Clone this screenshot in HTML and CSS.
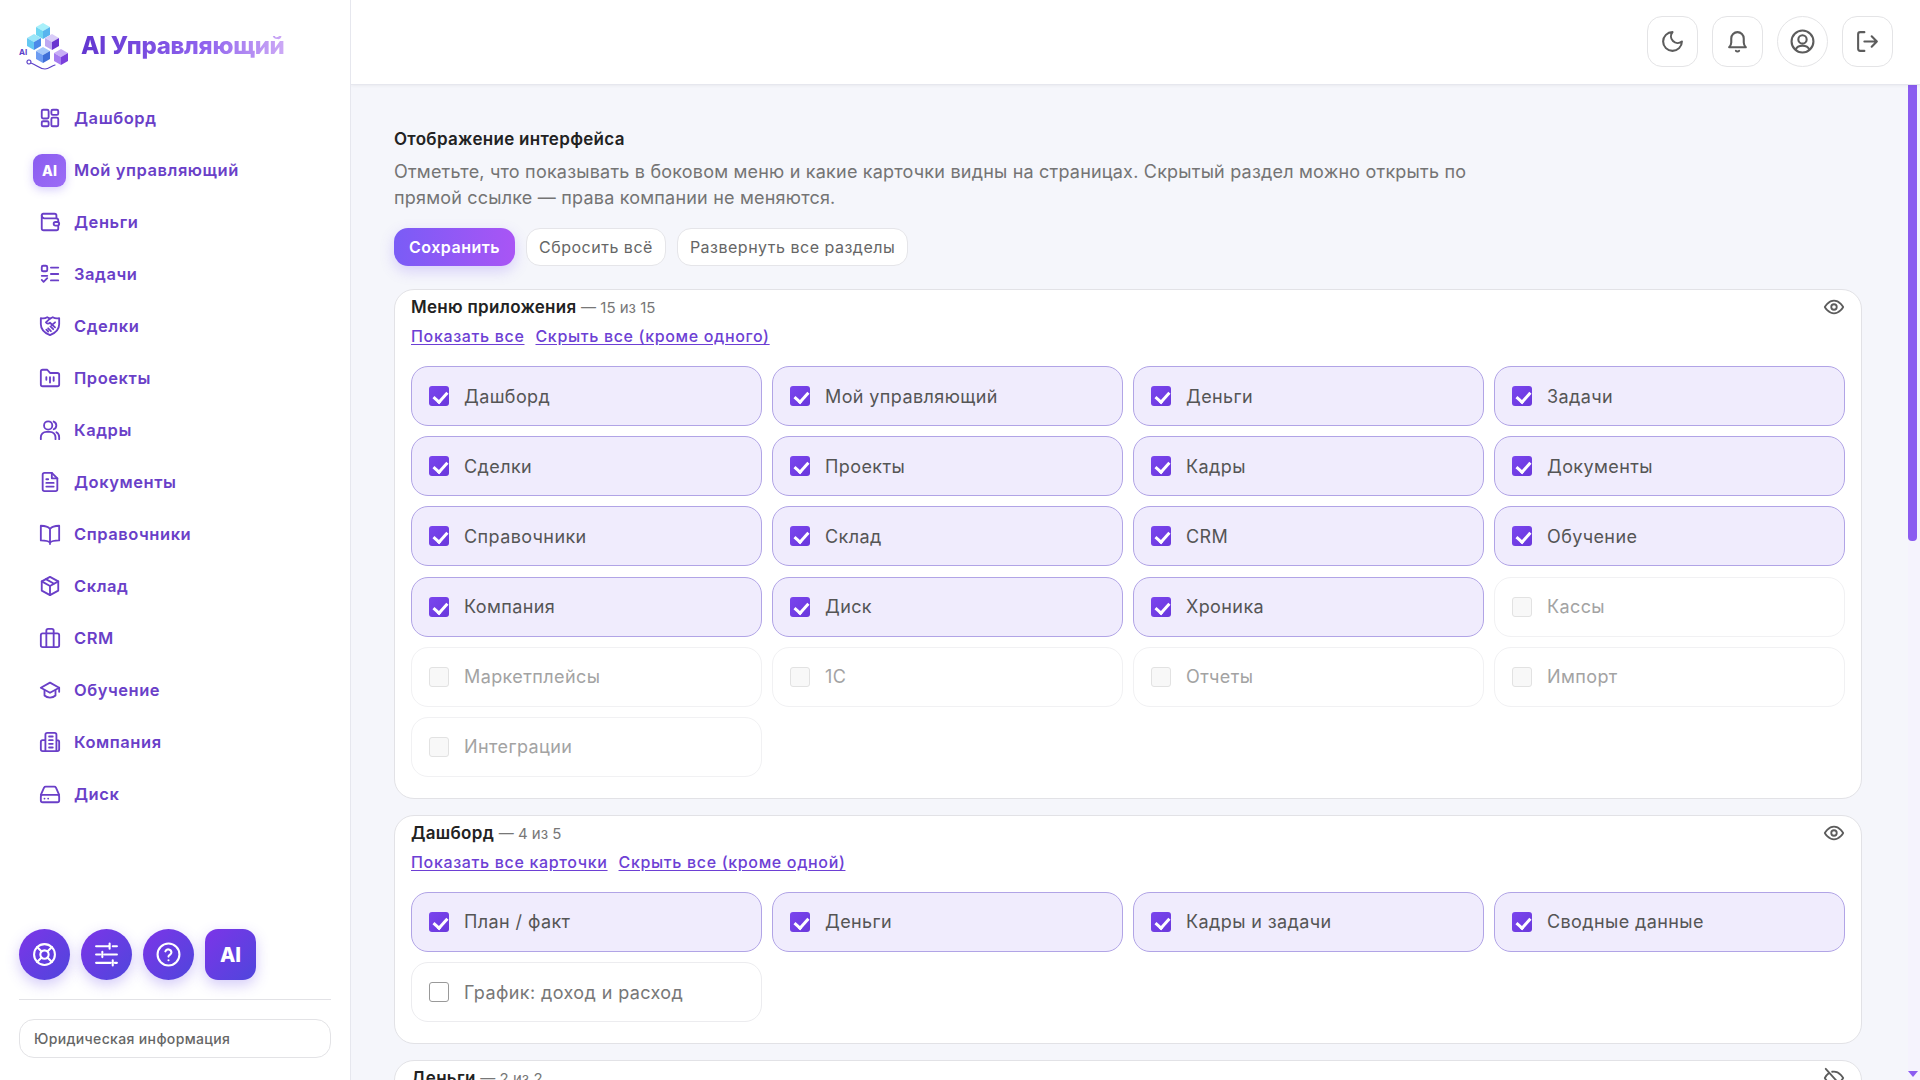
FILE: index.html
```html
<!DOCTYPE html>
<html lang="ru">
  <head>
    <meta charset="UTF-8" />
    <meta name="viewport" content="width=device-width, initial-scale=1.0" />
    <title>Отображение интерфейса</title>
    <link rel="stylesheet" href="styles.css">
  </head>
  <body>
    <div class="app">
      <aside class="sidebar">
        <div class="brand">
          <div class="brand-logo">
            <svg width="50" height="48" viewBox="0 0 50 48">
              <path d="M11 38a2 2 0 1 1-.1 0M13 41c6 2 8 6 14 6 4 0 6-3 10-4" fill="none" stroke="#5b3fc8" stroke-width="1.2"/>
              <polygon points="25,1 32,5 25,9 18,5" fill="#a8f0fa"/>
              <polygon points="18,5 25,9 25,17 18,13" fill="#6fd6f2"/>
              <polygon points="32,5 25,9 25,17 32,13" fill="#58b4ee"/>
              <polygon points="16,12 23,16 16,20 9,16" fill="#9be6f8"/>
              <polygon points="9,16 16,20 16,28 9,24" fill="#64c8f2"/>
              <polygon points="23,16 16,20 16,28 23,24" fill="#4c8ae8"/>
              <polygon points="34,12 41,16 34,20 27,16" fill="#d9cdf8"/>
              <polygon points="27,16 34,20 34,28 27,24" fill="#bda8f2"/>
              <polygon points="41,16 34,20 34,28 41,24" fill="#6a35d0"/>
              <polygon points="25,25 32,29 25,33 18,29" fill="#a5c8fa"/>
              <polygon points="18,29 25,33 25,41 18,37" fill="#6d9cf2"/>
              <polygon points="32,29 25,33 25,41 32,37" fill="#3f6fd8"/>
              <polygon points="43,27 50,31 43,35 36,31" fill="#c8aef6"/>
              <polygon points="36,31 43,35 43,43 36,39" fill="#a67cf0"/>
              <polygon points="50,31 43,35 43,43 50,39" fill="#7a3fdc"/>
            </svg>
            <span class="brand-ai">AI</span>
          </div>
          <span class="brand-name">AI Управляющий</span>
        </div>

        <nav class="nav">
          <a class="nav-item"><span class="nav-icon"><svg viewBox="0 0 24 24"><rect x="3" y="3" width="7.5" height="9.5" rx="1.5"/><rect x="13.5" y="3" width="7.5" height="5.5" rx="1.5"/><rect x="13.5" y="11.5" width="7.5" height="9.5" rx="1.5"/><rect x="3" y="15.5" width="7.5" height="5.5" rx="1.5"/></svg></span>Дашборд</a>
          <a class="nav-item"><span class="nav-badge">AI</span>Мой управляющий</a>
          <a class="nav-item"><span class="nav-icon"><svg viewBox="0 0 24 24"><path d="M19 8V5a2 2 0 0 0-2-2H4.500A1.500 1.500 0 0 0 3 4.500V19a2 2 0 0 0 2 2h14a2 2 0 0 0 2-2v-3"/><path d="M3 5c0 1.800 1 3 3 3h13a2 2 0 0 1 2 2v2"/><rect x="16" y="12" width="6" height="4" rx="2"/></svg></span>Деньги</a>
          <a class="nav-item"><span class="nav-icon"><svg viewBox="0 0 24 24"><rect x="3" y="3" width="6" height="6" rx="1.500"/><path d="M13 5h8M13 12h8M13 19h8M3 14h6M3 18.500l2 2 4-4"/></svg></span>Задачи</a>
          <a class="nav-item"><span class="nav-icon"><svg viewBox="0 0 24 24"><path d="M2 3.500c3 .6 5 .2 7-1l3 1.500 3-1.500c2 1.200 4 1.600 7 1V10c0 5.500-4 9.500-10 12C6 19.500 2 15.500 2 10z"/><path d="M12 4 7.500 8c1.200 1.800 3 1.800 4.500.5l5.500 5M14 11l3.500-3M12.500 12.500l3 3M10 14.500l3 3M8 16l2 2"/></svg></span>Сделки</a>
          <a class="nav-item"><span class="nav-icon"><svg viewBox="0 0 24 24"><path d="M2 5a2 2 0 0 1 2-2h5l3 3.500h8a2 2 0 0 1 2 2V19a2 2 0 0 1-2 2H4a2 2 0 0 1-2-2z"/><path d="M8 11v3M12 11v6M16 11v4"/></svg></span>Проекты</a>
          <a class="nav-item"><span class="nav-icon"><svg viewBox="0 0 24 24"><circle cx="10" cy="7" r="4.500"/><path d="M2 22v-2a6 6 0 0 1 6-6h4a6 6 0 0 1 6 6v2M16 2.800a4.500 4.500 0 0 1 0 8.400M19 14.500a6 6 0 0 1 3 5.500v2"/></svg></span>Кадры</a>
          <a class="nav-item"><span class="nav-icon"><svg viewBox="0 0 24 24"><path d="M14 2H6a2 2 0 0 0-2 2v16a2 2 0 0 0 2 2h12a2 2 0 0 0 2-2V8z"/><path d="M14 2v6h6M8 9h2M8 13h8M8 17h8"/></svg></span>Документы</a>
          <a class="nav-item"><span class="nav-icon"><svg viewBox="0 0 24 24"><path d="M12 6.500C10.500 4.500 8 3 2 3v16c6 0 8.500 .7 10 2.500 1.500-1.800 4-2.500 10-2.500V3c-6 0-8.500 1.500-10 3.500zM12 6.500V23"/></svg></span>Справочники</a>
          <a class="nav-item"><span class="nav-icon"><svg viewBox="0 0 24 24"><path d="M12 2 3 7v10l9 5 9-5V7z"/><path d="m3 7 9 5 9-5M12 12v10M7.500 4.500l9 5"/></svg></span>Склад</a>
          <a class="nav-item"><span class="nav-icon"><svg viewBox="0 0 24 24"><rect x="2" y="7" width="20" height="15" rx="2"/><path d="M8 22V4a2 2 0 0 1 2-2h4a2 2 0 0 1 2 2v18"/></svg></span>CRM</a>
          <a class="nav-item"><span class="nav-icon"><svg viewBox="0 0 24 24"><path d="M12 4 2 9.500 12 15l10-5.500z"/><path d="M6 12.500V18c3 3 9 3 12 0v-5.500M22 9.500V14"/></svg></span>Обучение</a>
          <a class="nav-item"><span class="nav-icon"><svg viewBox="0 0 24 24"><path d="M7 22V4a2 2 0 0 1 2-2h8a2 2 0 0 1 2 2v18zM7 10H4a2 2 0 0 0-2 2v8a2 2 0 0 0 2 2h3M19 10h1a2 2 0 0 1 2 2v8a2 2 0 0 1-2 2h-1M11 6h4M11 10h4M11 14h4M11 18h4"/></svg></span>Компания</a>
          <a class="nav-item"><span class="nav-icon"><svg viewBox="0 0 24 24"><path d="M2 13 5.500 5A2 2 0 0 1 7.300 4h9.400a2 2 0 0 1 1.800 1L22 13"/><rect x="2" y="13" width="20" height="8" rx="2"/><path d="M6 17h.01M10 17h.01"/></svg></span>Диск</a>
        </nav>

        <div class="side-bottom">
          <div class="tools">
            <button class="tool"><svg viewBox="0 0 24 24"><circle cx="12" cy="12" r="10"/><circle cx="12" cy="12" r="4"/><path d="m4.900 4.900 4.300 4.300M14.800 14.800l4.300 4.300M14.800 9.200l4.300-4.300M4.900 19.100l4.300-4.300"/></svg></button>
            <button class="tool"><svg viewBox="0 0 24 24"><path d="M2 4h12M18 4h4M2 12h4M10 12h12M2 20h14M20 20h2M15 1.500v5M8 9.500v5M18 17.500v5"/></svg></button>
            <button class="tool"><svg viewBox="0 0 24 24"><circle cx="12" cy="12" r="10.500"/><path d="M9 9a3 3 0 0 1 5.800 1c0 2-2.800 2.500-2.800 4M12 17.500h.01"/></svg></button>
            <button class="tool tool-ai">AI</button>
          </div>
          <div class="legal">Юридическая информация</div>
        </div>
      </aside>

      <div class="main">
        <header class="topbar">
          <button class="top-btn"><svg viewBox="0 0 24 24"><path d="M12 3a6.400 6.400 0 0 0 9 9 9 9 0 1 1-9-9z"/></svg></button>
          <button class="top-btn"><svg viewBox="0 0 24 24"><path d="M4 17.500c1.500-1.500 2-2.500 2-4.500V9a6 6 0 0 1 12 0v4c0 2 .5 3 2 4.500z"/><path d="M10.500 21a2 2 0 0 0 3 0"/></svg></button>
          <button class="top-btn round"><svg viewBox="0 0 24 24"><circle cx="12" cy="12" r="10.500"/><circle cx="12" cy="10" r="4"/><path d="M5.500 19.500c1-2.500 3.500-3.500 6.500-3.500s5.500 1 6.500 3.500"/></svg></button>
          <button class="top-btn"><svg viewBox="0 0 24 24"><path d="M9 3H5a2 2 0 0 0-2 2v14a2 2 0 0 0 2 2h4M9 12h12M16 7l5 5-5 5"/></svg></button>
        </header>

        <div class="content">
          <h1 class="page-title">Отображение интерфейса</h1>
          <p class="page-desc">Отметьте, что показывать в боковом меню и какие карточки видны на страницах. Скрытый раздел можно открыть по прямой ссылке — права компании не меняются.</p>
          <div class="actions">
            <button class="btn btn-main">Сохранить</button>
            <button class="btn">Сбросить всё</button>
            <button class="btn">Развернуть все разделы</button>
          </div>

          <section class="card">
            <div class="card-head">
              <div class="card-title">Меню приложения <span class="count">— 15 из 15</span></div>
              <svg class="eye" viewBox="0 0 24 24"><path d="M2 12s3.600-7 10-7 10 7 10 7-3.600 7-10 7-10-7-10-7z"/><circle cx="12" cy="12" r="3"/></svg>
            </div>
            <div class="links"><a>Показать все</a><a>Скрыть все (кроме одного)</a></div>
            <div class="grid">
              <label class="item on"><input type="checkbox" checked>Дашборд</label>
              <label class="item on"><input type="checkbox" checked>Мой управляющий</label>
              <label class="item on"><input type="checkbox" checked>Деньги</label>
              <label class="item on"><input type="checkbox" checked>Задачи</label>
              <label class="item on"><input type="checkbox" checked>Сделки</label>
              <label class="item on"><input type="checkbox" checked>Проекты</label>
              <label class="item on"><input type="checkbox" checked>Кадры</label>
              <label class="item on"><input type="checkbox" checked>Документы</label>
              <label class="item on"><input type="checkbox" checked>Справочники</label>
              <label class="item on"><input type="checkbox" checked>Склад</label>
              <label class="item on"><input type="checkbox" checked>CRM</label>
              <label class="item on"><input type="checkbox" checked>Обучение</label>
              <label class="item on"><input type="checkbox" checked>Компания</label>
              <label class="item on"><input type="checkbox" checked>Диск</label>
              <label class="item on"><input type="checkbox" checked>Хроника</label>
              <label class="item faded"><input type="checkbox">Кассы</label>
              <label class="item faded"><input type="checkbox">Маркетплейсы</label>
              <label class="item faded"><input type="checkbox">1С</label>
              <label class="item faded"><input type="checkbox">Отчеты</label>
              <label class="item faded"><input type="checkbox">Импорт</label>
              <label class="item faded"><input type="checkbox">Интеграции</label>
            </div>
          </section>

          <section class="card">
            <div class="card-head">
              <div class="card-title">Дашборд <span class="count">— 4 из 5</span></div>
              <svg class="eye" viewBox="0 0 24 24"><path d="M2 12s3.600-7 10-7 10 7 10 7-3.600 7-10 7-10-7-10-7z"/><circle cx="12" cy="12" r="3"/></svg>
            </div>
            <div class="links"><a>Показать все карточки</a><a>Скрыть все (кроме одной)</a></div>
            <div class="grid">
              <label class="item on"><input type="checkbox" checked>План / факт</label>
              <label class="item on"><input type="checkbox" checked>Деньги</label>
              <label class="item on"><input type="checkbox" checked>Кадры и задачи</label>
              <label class="item on"><input type="checkbox" checked>Сводные данные</label>
              <label class="item"><input type="checkbox">График: доход и расход</label>
            </div>
          </section>

          <section class="card">
            <div class="card-head">
              <div class="card-title">Деньги <span class="count">— 2 из 2</span></div>
              <svg class="eye" viewBox="0 0 24 24"><path d="M10 5.200A10 10 0 0 1 12 5c6.400 0 10 7 10 7a17 17 0 0 1-2.500 3.300M6.500 6.600A17 17 0 0 0 2 12s3.600 7 10 7a10 10 0 0 0 5.400-1.600M3 2l18 20"/></svg>
            </div>
          </section>
        </div>

        <div class="scroll-track">
          <div class="scroll-thumb"></div>
          <div class="scroll-arrow"></div>
        </div>
      </div>
    </div>
  </body>
</html>
```

FILE: styles.css
```css
* {
  margin: 0;
  padding: 0;
  box-sizing: border-box;
}
html, body {
  height: 100%;
  overflow: hidden;
}
body {
  font-family: Inter, "Noto Sans", sans-serif;
  background-color: #f5f6fb;
}
button {
  font-family: inherit;
  cursor: pointer;
}
svg {
  fill: none;
  stroke: currentColor;
  stroke-width: 2;
  stroke-linecap: round;
  stroke-linejoin: round;
}
.app {
  display: flex;
  height: 1080px;
}

/* боковое меню */
.sidebar {
  width: 351px;
  flex-shrink: 0;
  display: flex;
  flex-direction: column;
  background-color: #fff;
  border-right: 1px solid #e6e7ee;
}
.brand {
  height: 92px;
  padding: 22px 0 0 18px;
  display: flex;
  align-items: flex-start;
  gap: 13px;
}
.brand-logo {
  position: relative;
  width: 50px;
  height: 48px;
}
.brand-logo svg {
  stroke: none;
  display: block;
}
.brand-ai {
  position: absolute;
  left: 1px;
  top: 25px;
  font-size: 8px;
  font-weight: 700;
  color: #5b3fc8;
}
.brand-name {
  margin-top: 10px;
  font-size: 24px;
  line-height: 28px;
  font-weight: 800;
  letter-spacing: -0.3px;
  background: linear-gradient(90deg, #6236d0, #8f62ee 60%, #cdaaf6);
  -webkit-background-clip: text;
  background-clip: text;
  color: transparent;
}
.nav {
  padding-left: 33px;
}
.nav-item {
  height: 52px;
  display: flex;
  align-items: center;
  gap: 8px;
  font-size: 16.5px;
  font-weight: 600;
  letter-spacing: 0.55px;
  color: #6a3fc8;
}
.nav-icon {
  width: 33px;
  height: 33px;
  display: flex;
  align-items: center;
  justify-content: center;
}
.nav-icon svg {
  width: 22px;
  height: 22px;
}
.nav-badge {
  width: 33px;
  height: 33px;
  border-radius: 9px;
  display: flex;
  align-items: center;
  justify-content: center;
  font-size: 14px;
  font-weight: 800;
  letter-spacing: 0;
  color: #fff;
  background: linear-gradient(135deg, #8a5cf0, #9c6cf6);
  box-shadow: 0 3px 10px rgba(124, 92, 246, 0.3);
}
.side-bottom {
  margin-top: auto;
  padding: 0 19px 22px;
}
.tools {
  display: flex;
  gap: 11px;
  padding-bottom: 19px;
  border-bottom: 1px solid #e2e2e6;
}
.tool {
  width: 51px;
  height: 51px;
  border: none;
  border-radius: 50%;
  display: flex;
  align-items: center;
  justify-content: center;
  color: #fff;
  background: linear-gradient(135deg, #7c35e8, #4f46dc);
  box-shadow: 0 5px 14px rgba(100, 70, 230, 0.28);
}
.tool svg {
  width: 25px;
  height: 25px;
}
.tool-ai {
  border-radius: 13px;
  font-size: 20px;
  font-weight: 800;
}
.legal {
  margin-top: 19px;
  height: 39px;
  padding-left: 14px;
  display: flex;
  align-items: center;
  border: 1px solid #e3e3e6;
  border-radius: 15px;
  font-size: 14px;
  font-weight: 500;
  letter-spacing: 0.35px;
  color: #666;
}

/* правая часть */
.main {
  flex: 1;
  min-width: 0;
  position: relative;
  display: flex;
  flex-direction: column;
  overflow: hidden;
}
.topbar {
  height: 85px;
  flex-shrink: 0;
  display: flex;
  justify-content: flex-end;
  align-items: flex-start;
  gap: 14px;
  padding: 16px 27px 0 0;
  background-color: #fff;
  border-bottom: 1px solid #e6e7ee;
  box-shadow: 0 1px 3px rgba(0, 0, 0, 0.05);
  position: relative;
  z-index: 1;
}
.top-btn {
  width: 51px;
  height: 51px;
  border: 1px solid #e4e4e6;
  border-radius: 15px;
  background-color: #fff;
  color: #5c5c5c;
  display: flex;
  align-items: center;
  justify-content: center;
}
.top-btn svg {
  width: 25px;
  height: 25px;
}
.top-btn.round {
  border-radius: 50%;
}
.content {
  padding: 44px 58px 0 43px;
}
.page-title {
  font-size: 17px;
  line-height: 20px;
  font-weight: 600;
  letter-spacing: 0.3px;
  color: #222;
}
.page-desc {
  margin-top: 10px;
  max-width: 1090px;
  font-size: 18px;
  line-height: 26px;
  letter-spacing: 0.2px;
  color: #747474;
}
.actions {
  margin-top: 17px;
  display: flex;
  gap: 11px;
}
.btn {
  height: 38px;
  padding: 0 12px;
  border: 1px solid #e5e5e9;
  border-radius: 14px;
  background-color: #fff;
  font-size: 16px;
  letter-spacing: 0.5px;
  color: #666;
}
.btn-main {
  padding: 0 15px;
  border: none;
  font-weight: 600;
  color: #fff;
  background: linear-gradient(90deg, #7a5cf6, #a955f5);
  box-shadow: 0 5px 14px rgba(124, 92, 246, 0.25);
}
.card {
  margin-top: 16px;
  padding: 6px 16px 21px;
  background-color: #fff;
  border: 1px solid #e2e2e6;
  border-radius: 20px;
}
.actions + .card {
  margin-top: 23px;
}
.card-head {
  height: 22px;
  display: flex;
  align-items: center;
  justify-content: space-between;
}
.card-title {
  font-size: 17px;
  font-weight: 600;
  letter-spacing: 0.3px;
  color: #222;
}
.count {
  font-size: 15px;
  font-weight: 400;
  letter-spacing: 0;
  color: #777;
}
.eye {
  width: 22px;
  height: 22px;
  color: #5c5c5c;
}
.links {
  margin-top: 7px;
  display: flex;
  gap: 11px;
  font-size: 16px;
  line-height: 22px;
  font-weight: 500;
  letter-spacing: 0.65px;
  color: #6d3fd4;
}
.links a {
  text-decoration: underline;
  text-underline-offset: 2px;
}
.grid {
  margin-top: 19px;
  display: grid;
  grid-template-columns: repeat(4, 1fr);
  gap: 10.2px 10px;
}
.item {
  height: 60px;
  padding: 0 17px;
  display: flex;
  align-items: center;
  gap: 15px;
  border: 1px solid #ececef;
  border-radius: 17px;
  font-size: 18px;
  letter-spacing: 0.4px;
  color: #777;
}
.item.on {
  background-color: #f0ecfd;
  border-color: #b1a4e6;
  color: #555;
}
.item.faded {
  border-color: #f1f1f3;
  color: #a3a3a3;
}
.item input {
  appearance: none;
  position: relative;
  width: 20px;
  height: 20px;
  flex-shrink: 0;
  background-color: #fff;
  border: 1.5px solid #999;
  border-radius: 3px;
}
.item.faded input {
  background-color: #f8f8f8;
  border-color: #e2e2e2;
}
.item input:checked {
  border: none;
  background: linear-gradient(135deg, #7a45ee, #6a38dc);
}
.item input:checked::after {
  content: "";
  position: absolute;
  left: 7px;
  top: 3px;
  width: 6px;
  height: 11px;
  border-right: 3px solid #fff;
  border-bottom: 3px solid #fff;
  transform: rotate(42deg);
}

/* полоса прокрутки поверх страницы */
.scroll-track {
  position: absolute;
  top: 85px;
  right: 0;
  bottom: 0;
  width: 12px;
  background-color: #f5f3fd;
}
.scroll-thumb {
  width: 9px;
  height: 456px;
  background-color: #8b5cf0;
  border-radius: 0 0 4px 4px;
}
.scroll-arrow {
  position: absolute;
  left: 0;
  bottom: 3px;
  border-left: 5px solid transparent;
  border-right: 5px solid transparent;
  border-top: 6px solid #8b5cf0;
}
```
